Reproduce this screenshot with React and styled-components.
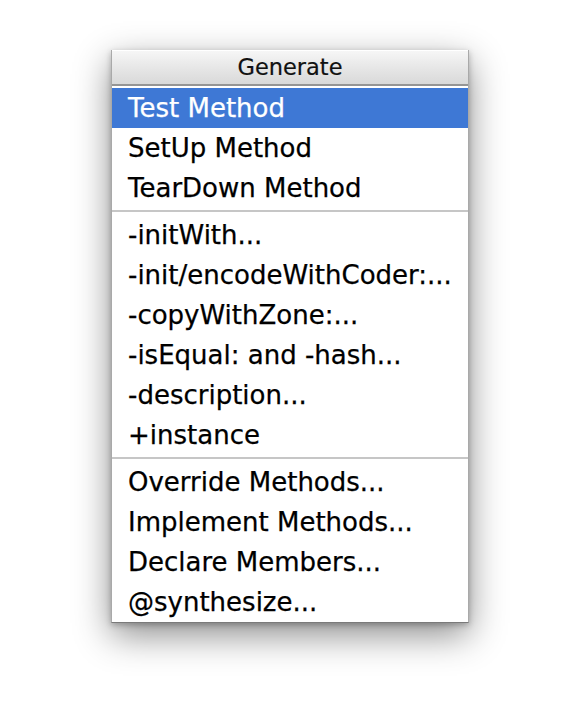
import React from 'react'
import styled, {createGlobalStyle} from 'styled-components'

const GlobalStyle = createGlobalStyle`
  html, body {
    margin: 0;
    background: #ffffff;
  }
  body {
    font-family: "DejaVu Sans", "Liberation Sans", sans-serif;
  }
`

const Page = styled.div`
  width: 576px;
  height: 718px;
  box-sizing: border-box;
  padding: 50px 0 0 111px;
`

const Popup = styled.div`
  width: 358px;
  box-sizing: border-box;
  background: #ffffff;
  border: 1px solid #a9a9a9;
  border-bottom-color: #7a7a7a;
  box-shadow: 0 12px 34px rgba(0, 0, 0, 0.45), 0 2px 6px rgba(0, 0, 0, 0.25);
  display: flex;
  flex-direction: column;
`

const Header = styled.div`
  height: 33px;
  line-height: 33px;
  text-align: center;
  font-size: 22.5px;
  color: #111;
  -webkit-text-stroke: 0.2px #111;
  background: linear-gradient(#f6f6f6, #e4e4e4 60%, #d9d9d9);
  border-top: 1px solid #ffffff;
  border-bottom: 2px solid #959595;
  box-sizing: content-box;
  margin-top: -1px;
`

const List = styled.div`
  padding-top: 2px;
  display: flex;
  flex-direction: column;
`

const Item = styled.div`
  height: 40px;
  line-height: 40px;
  padding-left: 16px;
  font-size: 26px;
  white-space: nowrap;
  color: ${p => (p.selected ? '#ffffff' : '#000000')};
  -webkit-text-stroke: 0.25px ${p => (p.selected ? '#ffffff' : '#000000')};
  background: ${p => (p.selected ? '#3e78d5' : 'transparent')};
`

const Separator = styled.div`
  height: 2px;
  margin: 2px 0 3px;
  background: #c6c6c6;
`

const groups = [
  ['Test Method', 'SetUp Method', 'TearDown Method'],
  [
    '-initWith...',
    '-init/encodeWithCoder:...',
    '-copyWithZone:...',
    '-isEqual: and -hash...',
    '-description...',
    '+instance',
  ],
  [
    'Override Methods...',
    'Implement Methods...',
    'Declare Members...',
    '@synthesize...',
  ],
]

const App = () => (
  <Page>
    <GlobalStyle />
    <Popup>
      <Header>Generate</Header>
      <List>
        {groups.map((group, gi) => (
          <React.Fragment key={gi}>
            {gi > 0 ? <Separator /> : null}
            {group.map(label => (
              <Item key={label} selected={label === 'Test Method'}>
                {label}
              </Item>
            ))}
          </React.Fragment>
        ))}
      </List>
    </Popup>
  </Page>
)

export default App
